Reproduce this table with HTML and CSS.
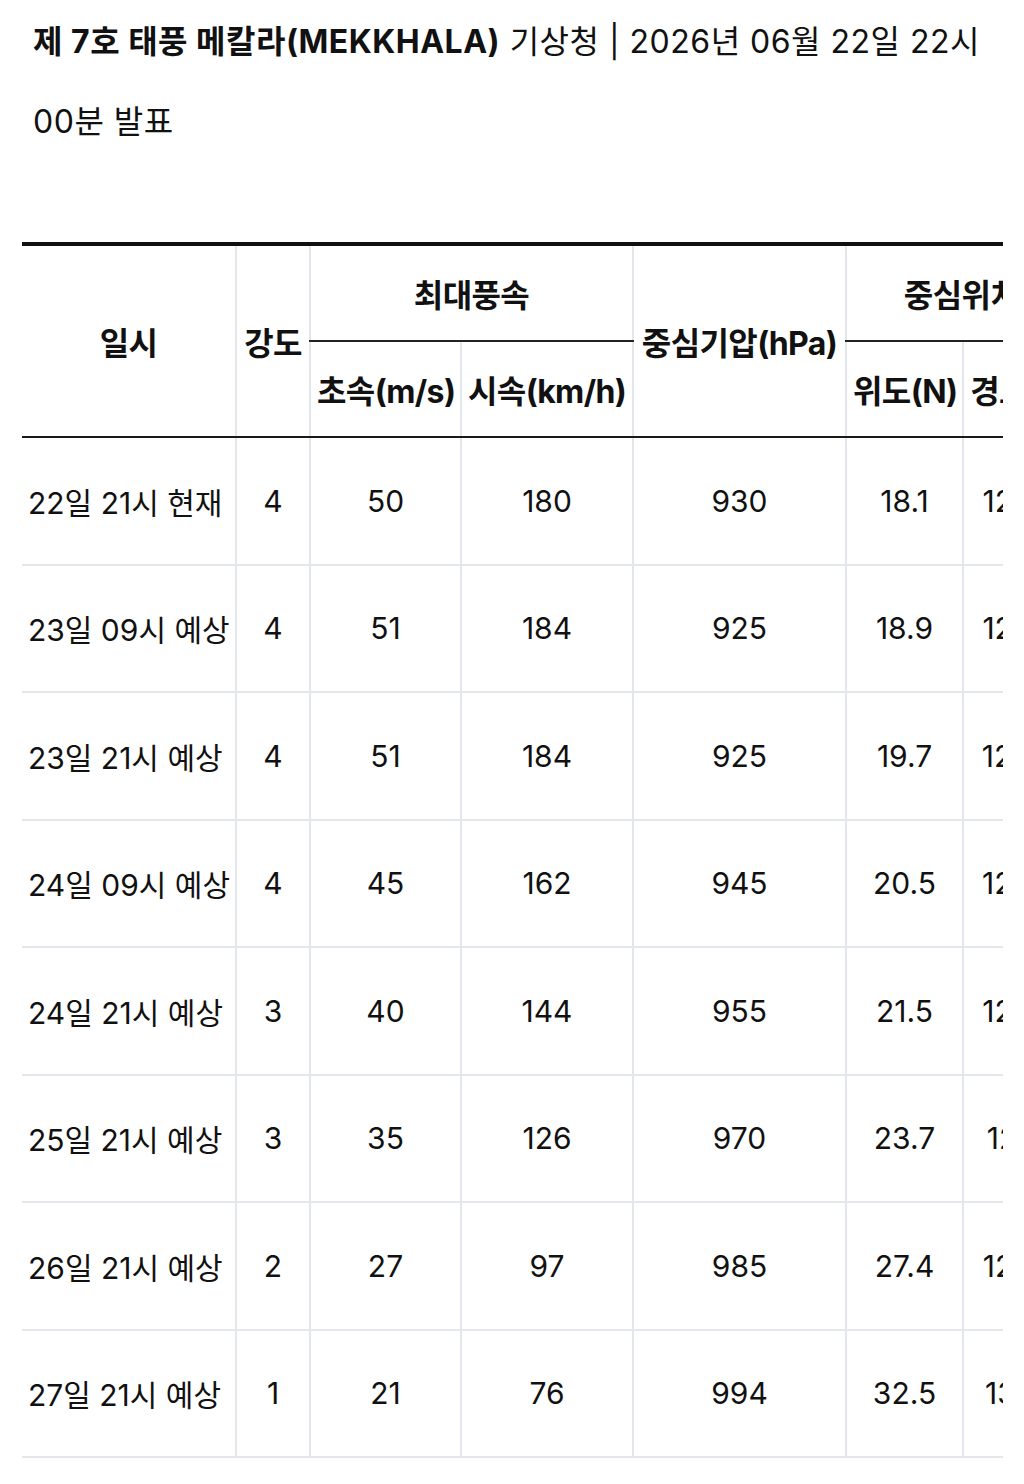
FILE: index.html
```html
<!DOCTYPE html>
<html lang="ko">
<head>
<meta charset="utf-8">
<link rel="stylesheet" href="styles.css">
</head>
<body>
<div class="page">
  <h1 class="title"><strong>제 7호 태풍 메칼라(MEKKHALA)</strong> 기상청 | 2026년 06월 22일 22시 00분 발표</h1>
  <div class="table-wrap">
    <table class="typhoon">
      <colgroup>
        <col class="c-date"><col class="c-int"><col class="c-ms"><col class="c-kmh"><col class="c-hpa"><col class="c-lat"><col class="c-lon"><col class="c-extra">
      </colgroup>
      <thead>
        <tr>
          <th rowspan="2">일시</th>
          <th rowspan="2">강도</th>
          <th colspan="2" class="group">최대풍속</th>
          <th rowspan="2">중심기압(hPa)</th>
          <th colspan="2" class="group">중심위치</th>
          <th rowspan="2">진행방향</th>
        </tr>
        <tr>
          <th>초속(m/s)</th>
          <th>시속(km/h)</th>
          <th>위도(N)</th>
          <th>경도(E)</th>
        </tr>
      </thead>
      <tbody>
        <tr><td class="date">22일 21시 현재</td><td>4</td><td>50</td><td>180</td><td>930</td><td>18.1</td><td>124.8</td><td>북서</td></tr>
        <tr><td class="date">23일 09시 예상</td><td>4</td><td>51</td><td>184</td><td>925</td><td>18.9</td><td>124.0</td><td>북서</td></tr>
        <tr><td class="date">23일 21시 예상</td><td>4</td><td>51</td><td>184</td><td>925</td><td>19.7</td><td>123.4</td><td>북서</td></tr>
        <tr><td class="date">24일 09시 예상</td><td>4</td><td>45</td><td>162</td><td>945</td><td>20.5</td><td>122.9</td><td>북북서</td></tr>
        <tr><td class="date">24일 21시 예상</td><td>3</td><td>40</td><td>144</td><td>955</td><td>21.5</td><td>122.6</td><td>북</td></tr>
        <tr><td class="date">25일 21시 예상</td><td>3</td><td>35</td><td>126</td><td>970</td><td>23.7</td><td>123.1</td><td>북북동</td></tr>
        <tr><td class="date">26일 21시 예상</td><td>2</td><td>27</td><td>97</td><td>985</td><td>27.4</td><td>125.6</td><td>북동</td></tr>
        <tr><td class="date">27일 21시 예상</td><td>1</td><td>21</td><td>76</td><td>994</td><td>32.5</td><td>131.2</td><td>북동</td></tr>
      </tbody>
    </table>
  </div>
</div>
</body>
</html>
```

FILE: styles.css
```css
html, body {
  margin: 0;
  padding: 0;
  background: #ffffff;
}

body {
  font-family: Inter, "Noto Sans CJK KR", sans-serif;
  color: #111111;
}

.page {
  padding: 2px 21px 0 22px;
}

.title {
  margin: 0 0 80px 11px;
  font-size: 32px;
  line-height: 80px;
  font-weight: 400;
  letter-spacing: 0.5px;
  color: #111111;
}

.title strong {
  font-weight: 700;
}

.table-wrap {
  width: 981px;
  overflow: hidden;
}

.typhoon {
  border-collapse: collapse;
  table-layout: fixed;
  width: 1234px;
  border-top: 4px solid #111111;
}

.c-date { width: 214px; }
.c-int { width: 74px; }
.c-ms { width: 151px; }
.c-kmh { width: 172px; }
.c-hpa { width: 213px; }
.c-lat { width: 117px; }
.c-lon { width: 114px; }
.c-extra { width: 179px; }

.typhoon th,
.typhoon td {
  padding: 0 6px;
  text-align: center;
  vertical-align: middle;
  white-space: nowrap;
  border-left: 2px solid #e3e7ec;
}

.typhoon th:first-child,
.typhoon tbody td:first-child {
  border-left: none;
}

.typhoon thead tr:nth-child(2) th:first-child {
  border-left: 2px solid #e3e7ec;
}

.typhoon th {
  font-size: 32px;
  font-weight: 700;
  letter-spacing: -0.6px;
  height: 94px;
}

.typhoon th.group {
  border-bottom: 2px solid #222222;
}

.typhoon thead tr:last-child th {
  border-bottom: 2px solid #1a1a1a;
}

.typhoon thead tr:first-child th[rowspan] {
  border-bottom: 2px solid #1a1a1a;
}

.typhoon td {
  font-size: 30px;
  font-weight: 400;
  letter-spacing: 0;
  height: 125.5px;
  border-bottom: 2px solid #e3e7ec;
}

.typhoon td.date {
  text-align: left;
}
```
